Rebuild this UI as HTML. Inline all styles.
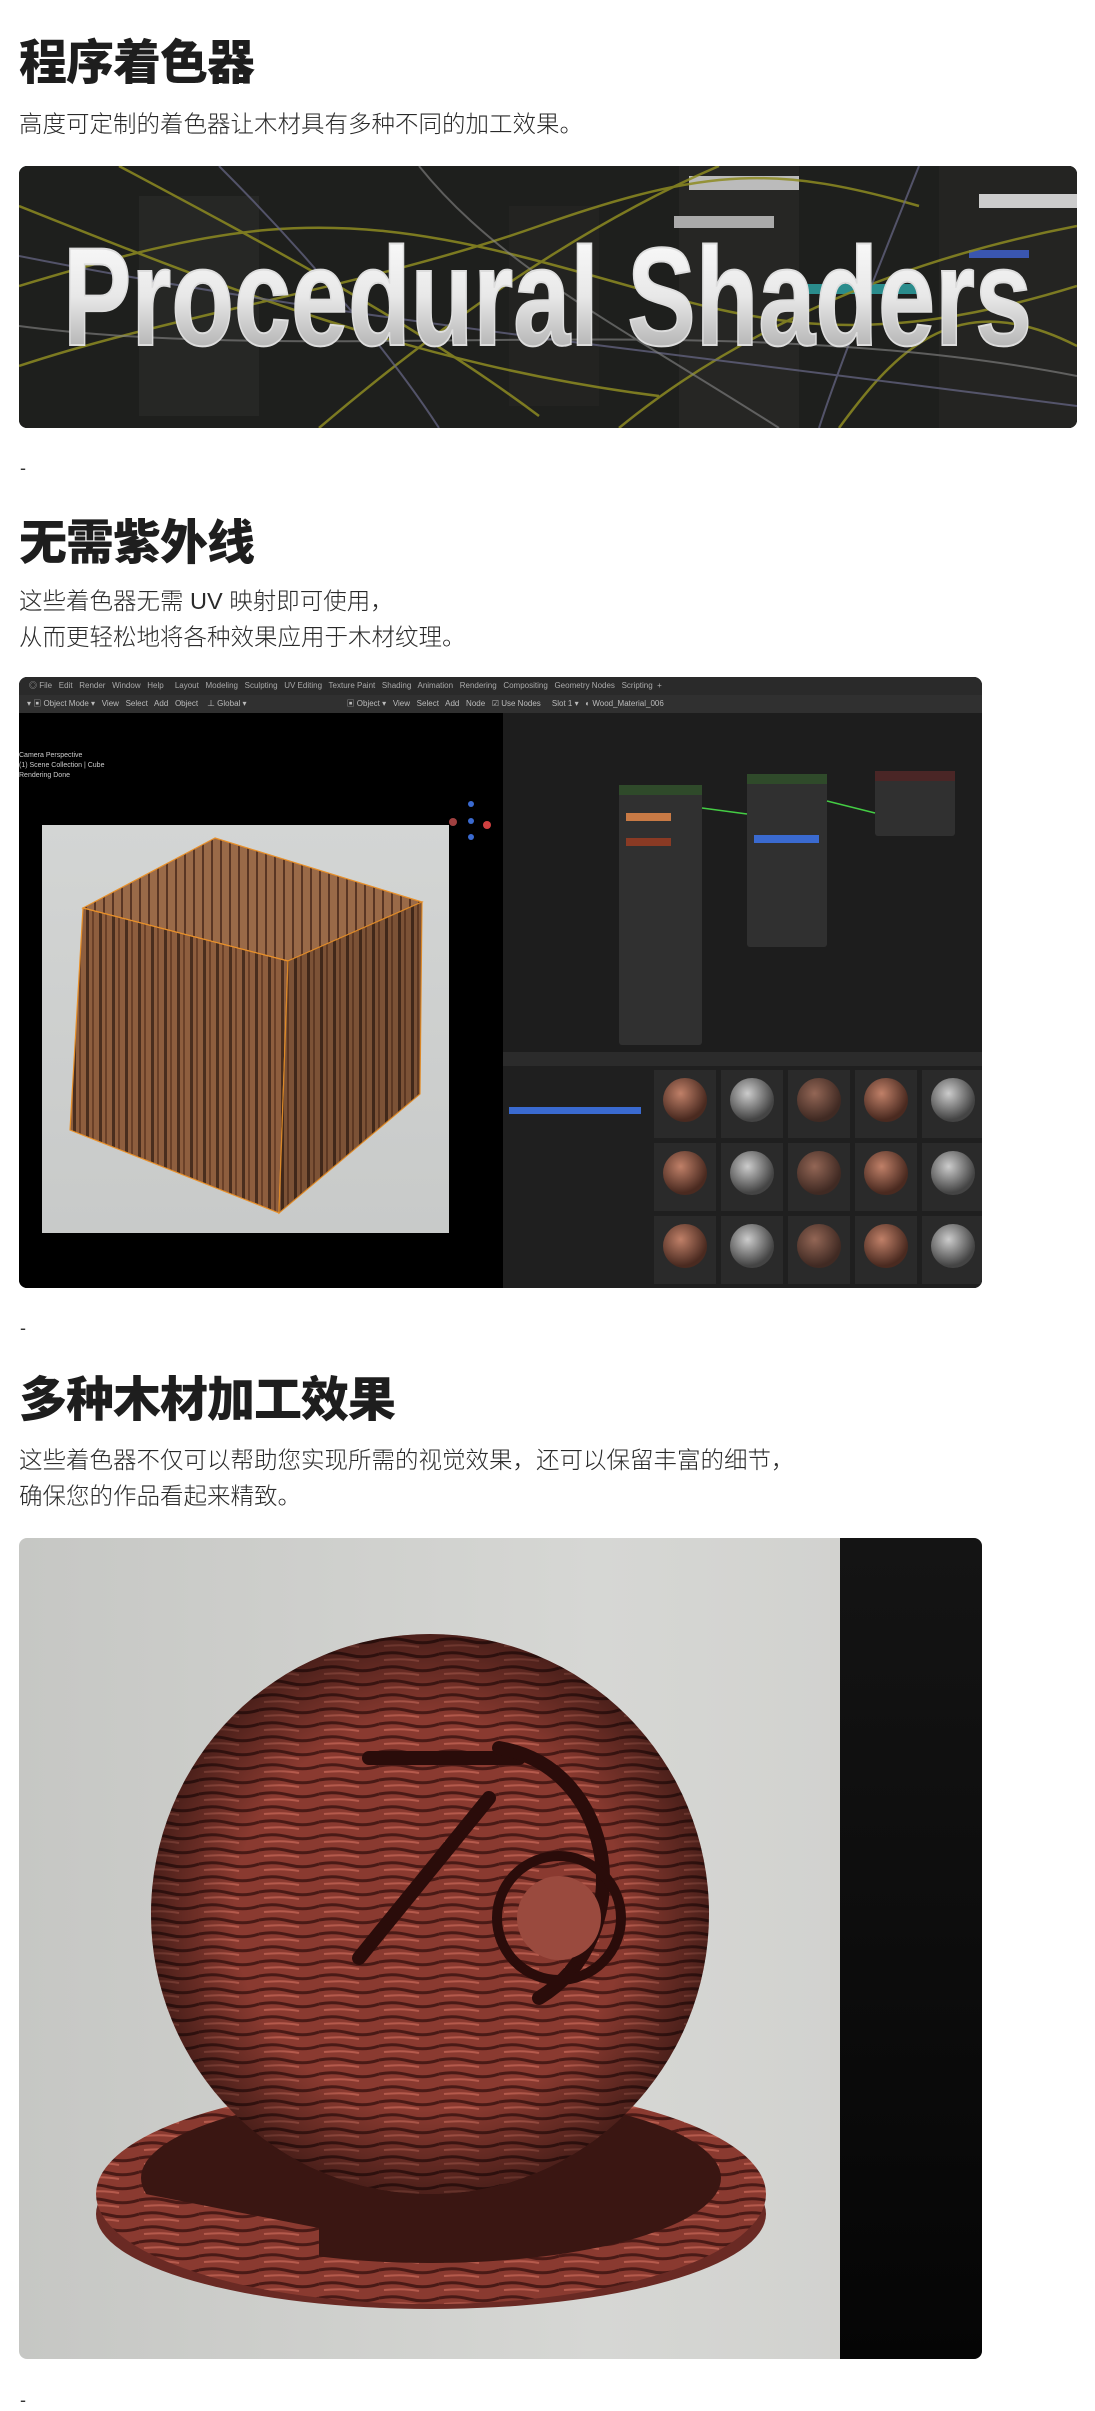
<!DOCTYPE html>
<html><head><meta charset="utf-8"><style>
*{margin:0;padding:0;box-sizing:border-box}
body{width:1095px;height:2411px;background:#fff;position:relative;overflow:hidden;font-family:"Liberation Sans","Noto Sans CJK SC",sans-serif;color:#222}
.a{position:absolute}
h1{position:absolute;left:19px;font-size:48px;font-weight:900;color:#1e1e1e;line-height:1;letter-spacing:-1px}
p{position:absolute;left:19px;font-size:23.5px;line-height:36px;color:#2a2a2a;font-weight:300}
.dash{position:absolute;left:20px;font-size:18px;color:#333}
</style></head><body>
<h1 style="top:40px">程序着色器</h1>
<p style="top:106px">高度可定制的着色器让木材具有多种不同的加工效果。</p>

<div class="a" style="left:19px;top:166px;width:1058px;height:262px;border-radius:8px;overflow:hidden;background:#1c1d1b">
<svg width="1058" height="262" style="position:absolute;left:0;top:0">
<rect x="0" y="0" width="1058" height="262" fill="#1e1f1d"/>
<rect x="660" y="0" width="120" height="262" fill="#262624"/>
<rect x="920" y="0" width="138" height="262" fill="#242422"/>
<rect x="120" y="30" width="120" height="220" fill="#262725"/>
<rect x="490" y="40" width="90" height="200" fill="#232321"/>
<rect x="670" y="10" width="110" height="14" fill="#bbb"/>
<rect x="655" y="50" width="100" height="12" fill="#aaa"/>
<rect x="960" y="28" width="98" height="14" fill="#ccc"/>
<rect x="780" y="118" width="120" height="10" fill="#2a8c8c"/>
<rect x="950" y="84" width="60" height="8" fill="#3a56b0"/>
<g fill="none" stroke="#8d8b22" stroke-width="2.5" opacity=".85">
<path d="M0 120 C200 60 300 40 500 90 S800 200 1058 120"/>
<path d="M0 200 C150 150 350 120 520 60 S760 0 900 40"/>
<path d="M100 0 C250 80 400 160 520 250"/>
<path d="M300 262 C420 160 560 60 700 0"/>
<path d="M600 262 C700 180 850 100 1058 60"/>
<path d="M0 40 C200 120 400 200 640 230"/>
<path d="M820 262 C880 180 940 120 1058 180"/>
</g>
<g fill="none" stroke="#6a6a8a" stroke-width="2" opacity=".7">
<path d="M0 90 C300 150 600 180 1058 240"/>
<path d="M200 0 C300 100 380 200 420 262"/>
<path d="M900 0 C860 100 820 200 800 262"/>
</g>
<g fill="none" stroke="#888" stroke-width="2" opacity=".6">
<path d="M0 160 C300 200 700 140 1058 210"/>
<path d="M400 0 C480 100 600 160 760 262"/>
</g>
<defs><linearGradient id="tg" x1="0" y1="0" x2="0" y2="1"><stop offset="0" stop-color="#ffffff"/><stop offset=".5" stop-color="#e8e8e8"/><stop offset="1" stop-color="#9a9a9a"/></linearGradient></defs>
<text x="44" y="179" font-family="Liberation Sans Narrow,Liberation Sans,sans-serif" font-weight="bold" font-size="140" fill="url(#tg)" stroke="#ddd" stroke-width="2" textLength="969" lengthAdjust="spacingAndGlyphs">Procedural Shaders</text>
</svg></div>

<div class="dash" style="top:458px">-</div>
<h1 style="top:520px">无需紫外线</h1>
<p style="top:583px">这些着色器无需 UV 映射即可使用，<br>从而更轻松地将各种效果应用于木材纹理。</p>

<div class="a" style="left:19px;top:677px;width:963px;height:611px;border-radius:8px;overflow:hidden;background:#1d1d1d">
<div class="a" style="left:0;top:0;width:963px;height:18px;background:#2a2a2a;color:#aaa;font-size:8px;line-height:18px;padding-left:10px;white-space:nowrap">◎ File &nbsp; Edit &nbsp; Render &nbsp; Window &nbsp; Help &nbsp;&nbsp;&nbsp; Layout &nbsp; Modeling &nbsp; Sculpting &nbsp; UV Editing &nbsp; Texture Paint &nbsp; Shading &nbsp; Animation &nbsp; Rendering &nbsp; Compositing &nbsp; Geometry Nodes &nbsp; Scripting &nbsp;+</div>
<div class="a" style="left:0;top:18px;width:963px;height:18px;background:#303030;color:#bbb;font-size:8px;line-height:18px;padding-left:8px;white-space:nowrap">▾ ▣ Object Mode ▾ &nbsp; View &nbsp; Select &nbsp; Add &nbsp; Object &nbsp;&nbsp; ⊥ Global ▾ &nbsp;&nbsp;&nbsp;&nbsp;&nbsp;&nbsp;&nbsp;&nbsp;&nbsp;&nbsp;&nbsp;&nbsp;&nbsp;&nbsp;&nbsp;&nbsp;&nbsp;&nbsp;&nbsp;&nbsp;&nbsp;&nbsp;&nbsp;&nbsp;&nbsp;&nbsp;&nbsp;&nbsp;&nbsp;&nbsp;&nbsp;&nbsp;&nbsp;&nbsp;&nbsp;&nbsp;&nbsp;&nbsp;&nbsp;&nbsp;&nbsp;&nbsp;&nbsp; ▣ Object ▾ &nbsp; View &nbsp; Select &nbsp; Add &nbsp; Node &nbsp; ☑ Use Nodes &nbsp;&nbsp;&nbsp; Slot 1 ▾ &nbsp; ◐ Wood_Material_006</div>
<div class="a" style="left:0;top:36px;width:484px;height:575px;background:#000">
<div class="a" style="left:0;top:38px;color:#ccc;font-size:7px;line-height:10px">Camera Perspective<br>(1) Scene Collection | Cube<br>Rendering Done</div>
<div class="a" style="left:23px;top:112px;width:407px;height:408px;background:linear-gradient(#d3d5d4,#c8cac9)"></div>
<svg class="a" style="left:0;top:0" width="484" height="575">
<defs>
<pattern id="wd" width="13" height="400" patternUnits="userSpaceOnUse"><rect width="13" height="400" fill="#8e5e3e"/><rect x="2" width="3" height="400" fill="#4a2e1e"/><rect x="8" width="2" height="400" fill="#6a4028"/></pattern>
<pattern id="wd2" width="9" height="400" patternUnits="userSpaceOnUse"><rect width="9" height="400" fill="#9a6a48"/><rect x="3" width="2" height="400" fill="#5a3624"/></pattern>
</defs>
<polygon points="196,125 403,189 269,248 64,195" fill="url(#wd2)" stroke="#e8902a" stroke-width="1.2"/>
<polygon points="64,195 269,248 260,500 51,417" fill="url(#wd)" stroke="#e8902a" stroke-width="1.2"/>
<polygon points="269,248 403,189 401,381 260,500" fill="url(#wd)" stroke="#e8902a" stroke-width="1.2"/>
<polygon points="269,248 403,189 401,381 260,500" fill="#000" opacity=".12"/>
<circle cx="452" cy="108" r="3" fill="#3a6ad0"/><circle cx="468" cy="112" r="4" fill="#d04040"/><circle cx="434" cy="109" r="4" fill="#a04040"/><circle cx="452" cy="124" r="3" fill="#3a6ad0"/><circle cx="452" cy="91" r="3" fill="#3a6ad0"/>
</svg>
</div>
<div class="a" style="left:600px;top:108px;width:83px;height:260px;background:#303030;border-radius:3px"><div style="height:10px;background:#2f4a2a"></div></div>
<div class="a" style="left:728px;top:97px;width:80px;height:173px;background:#303030;border-radius:3px"><div style="height:10px;background:#2f4a2a"></div></div>
<div class="a" style="left:856px;top:94px;width:80px;height:65px;background:#303030;border-radius:3px"><div style="height:10px;background:#4a2626"></div></div>
<div class="a" style="left:607px;top:136px;width:45px;height:8px;background:#c87a45"></div>
<div class="a" style="left:607px;top:161px;width:45px;height:8px;background:#8a3a24"></div>
<div class="a" style="left:735px;top:158px;width:65px;height:8px;background:#3a6ad0"></div>
<svg class="a" style="left:0;top:0" width="963" height="611"><path d="M683 131 L728 137 M808 124 L856 136" stroke="#4c4" stroke-width="1.5" fill="none"/></svg>
<div class="a" style="left:484px;top:375px;width:479px;height:236px;background:#1f1f1f">
<div style="height:14px;background:#2b2b2b"></div>
<div class="a" style="left:6px;top:55px;width:132px;height:7px;background:#3a6ad0"></div>
</div>
<svg class="a" style="left:635px;top:393px" width="330" height="218">
<defs><radialGradient id="sp" cx=".4" cy=".35" r=".6"><stop offset="0" stop-color="#c08068"/><stop offset="1" stop-color="#4a2a20"/></radialGradient>
<radialGradient id="sg" cx=".4" cy=".35" r=".6"><stop offset="0" stop-color="#ccc"/><stop offset="1" stop-color="#444"/></radialGradient></defs>
<g id="r">
<rect x="0" y="0" width="62" height="68" fill="#2a2a2a"/><circle cx="31" cy="30" r="22" fill="url(#sp)"/>
<rect x="67" y="0" width="62" height="68" fill="#2a2a2a"/><circle cx="98" cy="30" r="22" fill="url(#sg)"/>
<rect x="134" y="0" width="62" height="68" fill="#2a2a2a"/><circle cx="165" cy="30" r="22" fill="url(#sp)" opacity=".7"/>
<rect x="201" y="0" width="62" height="68" fill="#2a2a2a"/><circle cx="232" cy="30" r="22" fill="url(#sp)"/>
<rect x="268" y="0" width="62" height="68" fill="#2a2a2a"/><circle cx="299" cy="30" r="22" fill="url(#sg)"/>
</g>
<use href="#r" y="73"/><use href="#r" y="146"/>
</svg>
</div>

<div class="dash" style="top:1318px">-</div>
<h1 style="top:1377px">多种木材加工效果</h1>
<p style="top:1442px">这些着色器不仅可以帮助您实现所需的视觉效果，还可以保留丰富的细节，<br>确保您的作品看起来精致。</p>

<div class="a" style="left:19px;top:1538px;width:963px;height:821px;border-radius:8px;overflow:hidden;background:linear-gradient(90deg,#c6c7c4,#d6d7d4 60%,#cfcfcc)">
<div class="a" style="left:821px;top:0;width:142px;height:821px;background:linear-gradient(#141414,#050505)"></div>
<svg class="a" style="left:0;top:0" width="821" height="821">
<defs>
<pattern id="rw" width="60" height="14" patternUnits="userSpaceOnUse"><rect width="60" height="14" fill="#8a3a30"/><path d="M0 4 Q15 1 30 5 T60 4" stroke="#4a1a16" stroke-width="3" fill="none"/><path d="M5 10 Q25 8 40 11" stroke="#b55a4c" stroke-width="2" fill="none"/></pattern>
<radialGradient id="sh" cx=".5" cy=".5" r=".5"><stop offset=".7" stop-color="#000" stop-opacity="0"/><stop offset="1" stop-color="#000" stop-opacity=".45"/></radialGradient>
</defs>
<ellipse cx="412" cy="676" rx="335" ry="95" fill="#6a2a24"/>
<ellipse cx="412" cy="656" rx="335" ry="110" fill="url(#rw)"/>
<ellipse cx="412" cy="640" rx="290" ry="85" fill="#3a1612"/>
<ellipse cx="411" cy="376" rx="279" ry="280" fill="url(#rw)"/>
<ellipse cx="411" cy="376" rx="279" ry="280" fill="url(#sh)"/>
<path d="M96 650 L300 690 L300 740 L96 690Z" fill="url(#rw)"/>
<g fill="none" stroke="#2a0c0a" stroke-width="14" stroke-linecap="round">
<path d="M350 220 L500 220"/>
<path d="M470 260 L340 420"/>
<path d="M480 210 C600 230 620 400 520 460"/>
</g>
<circle cx="540" cy="380" r="62" fill="none" stroke="#2a0c0a" stroke-width="10"/>
<circle cx="540" cy="380" r="42" fill="#9a4a3e"/>
</svg>
</div>

<div class="dash" style="top:2390px">-</div>
</body></html>
